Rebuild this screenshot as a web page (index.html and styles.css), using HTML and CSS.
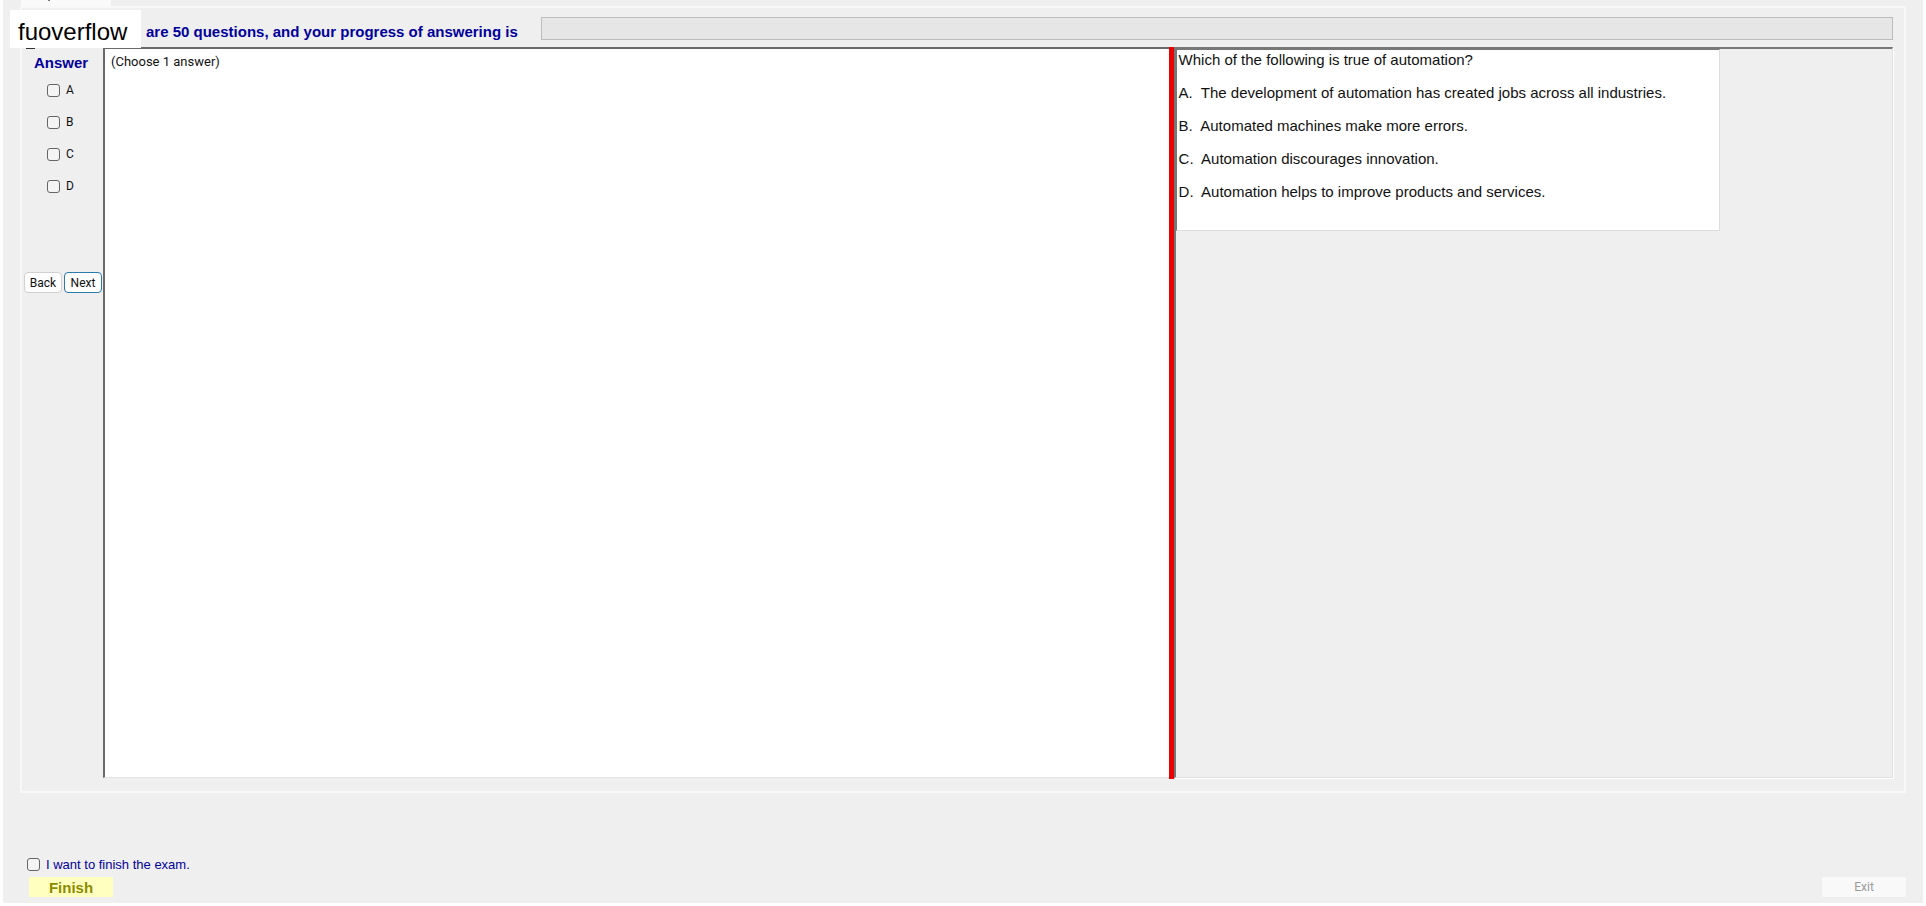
FILE: index.html
```
<!DOCTYPE html>
<html lang="en">
<head>
  <meta charset="UTF-8">
  <title>Exam</title>
  <link rel="stylesheet" href="styles.css">
</head>
<body>
  <div class="window">
    <div class="tab"></div>

    <div class="tab-page">
      <header class="top-bar">
        <div class="brand">fuoverflow</div>
        <label for="progress">are 50 questions, and your progress of answering is</label>
        <progress id="progress" value="0" max="50"></progress>
      </header>

      <div class="exam">
        <fieldset class="answers">
          <legend>Answer</legend>
          <label><input type="checkbox" name="answer" value="A">A</label>
          <label><input type="checkbox" name="answer" value="B">B</label>
          <label><input type="checkbox" name="answer" value="C">C</label>
          <label><input type="checkbox" name="answer" value="D">D</label>
          <div class="nav-buttons">
            <button type="button">Back</button>
            <button type="button" class="next">Next</button>
          </div>
        </fieldset>

        <main class="sheet">(Choose 1 answer)</main>
        <div class="splitter"></div>

        <section class="side">
          <div class="question">
            <p>Which of the following is true of automation?</p>
            <p>A.&nbsp; The development of automation has created jobs across all industries.</p>
            <p>B.&nbsp; Automated machines make more errors.</p>
            <p>C.&nbsp; Automation discourages innovation.</p>
            <p>D.&nbsp; Automation helps to improve products and services.</p>
          </div>
        </section>
      </div>
    </div>

    <footer class="bottom-bar">
      <div class="finish">
        <label><input type="checkbox" id="want-finish">I want to finish the exam.</label>
        <button type="button" class="finish-btn">Finish</button>
      </div>
      <button type="button" class="exit-btn" disabled>Exit</button>
    </footer>
  </div>
</body>
</html>
```

FILE: styles.css
```
* {
  box-sizing: border-box;
}

body {
  margin: 0;
  background-color: #fff;
  color: #111;
  font-family: "Liberation Sans", Arial, sans-serif;
  font-size: 13px;
}

.window {
  display: flex;
  flex-direction: column;
  height: calc(100vh - 3px);
  margin: 0 3px;
  padding: 0 17px;
  background-color: #efefef;
}

.tab {
  width: 90px;
  height: 6px;
  margin-left: 1px;
  padding-left: 27px;
  background-color: #fafafa;
}

/* end of the tab caption above the window edge */
.tab::before {
  content: "";
  display: block;
  width: 2px;
  height: 1px;
  background-color: #777;
}

.tab-page {
  flex: 1;
  display: flex;
  flex-direction: column;
  border: 2px solid #f8f8f8;
  padding: 0 11px 13px 0;
}

.top-bar {
  display: flex;
  align-items: flex-start;
  height: 39px;
  margin-left: -12px;
}

.brand {
  position: relative;
  width: 131px;
  height: 38px;
  margin-top: 2px;
  padding-left: 8px;
  background-color: #fff;
  color: #000;
  font-size: 24px;
  line-height: 44px;
}

.brand::after {
  content: "";
  position: absolute;
  left: 16px;
  top: 100%;
  width: 9px;
  height: 1px;
  background-color: #333;
}

.top-bar label {
  margin: 16px 23px 0 5px;
  color: #00009c;
  font-size: 15px;
  font-weight: bold;
  line-height: 16px;
  white-space: nowrap;
}

progress {
  appearance: none;
  flex: 1;
  height: 23px;
  margin-top: 9px;
  border: 1px solid #bcbcbc;
  background-color: #e6e6e6;
}

progress::-webkit-progress-bar {
  background-color: #e6e6e6;
}

.exam {
  flex: 1;
  display: flex;
}

.answers {
  width: 81px;
  margin: 0;
  padding: 0;
  border: 0;
  font-family: Roboto, sans-serif;
  font-size: 12px;
}

.answers legend {
  float: left;
  width: 100%;
  margin-bottom: 12px;
  padding: 8px 0 0 12px;
  color: #00009c;
  font-family: "Liberation Sans", Arial, sans-serif;
  font-size: 15px;
  font-weight: bold;
  line-height: 16px;
}

.answers label {
  clear: both;
  display: flex;
  align-items: center;
  gap: 6px;
  height: 14px;
  margin: 0 0 18px 25px;
}

input[type="checkbox"] {
  appearance: none;
  width: 13px;
  height: 13px;
  margin: 0;
  border: 1px solid #666;
  border-radius: 3px;
  background-color: #f4f4f4;
}

input[type="checkbox"]:checked {
  background-color: #0067c0;
}

button {
  padding: 0;
  font-family: Roboto, sans-serif;
  font-size: 12px;
}

.nav-buttons {
  display: flex;
  gap: 2px;
  margin: 79px 0 0 2px;
}

.nav-buttons button {
  width: 38px;
  height: 21px;
  border: 1px solid #d0d0d0;
  border-radius: 4px;
  background-color: #fdfdfd;
  color: #111;
}

.nav-buttons .next {
  border-color: #2a7ab0;
}

.sheet {
  flex: 1051;
  padding: 5px 6px;
  border: 2px solid #696969;
  border-right: 0;
  border-bottom: 1px solid #e3e3e3;
  background-color: #fff;
  font-family: Roboto, sans-serif;
  line-height: 15px;
}

.splitter {
  width: 5px;
  margin-bottom: -1px;
  background-color: #ea0000;
}

.side {
  flex: 716;
  border: 2px solid #777;
  border-right: 1px solid #e0e0e0;
  border-bottom: 1px solid #e0e0e0;
  box-shadow: 1px 1px 0 #fff;
}

.question {
  width: 76%;
  height: 182px;
  padding: 1px 2px;
  border: 1px solid #777;
  border-right-color: #ddd;
  border-bottom-color: #ddd;
  background-color: #fff;
  font-size: 15px;
  line-height: 17px;
}

.question p {
  margin: 0 0 16px;
}

.bottom-bar {
  display: flex;
  align-items: flex-end;
  justify-content: space-between;
  height: 110px;
  padding: 0 0 6px 7px;
}

.finish label {
  display: flex;
  align-items: center;
  gap: 6px;
  margin-bottom: 5px;
  color: #00009c;
}

.finish-btn {
  display: block;
  width: 84px;
  height: 20px;
  margin-left: 2px;
  border: 0;
  background-color: #ffffc0;
  color: #8b8b00;
  font-family: "Liberation Sans", Arial, sans-serif;
  font-size: 15px;
  font-weight: bold;
}

.exit-btn {
  width: 84px;
  height: 20px;
  border: 0;
  border-radius: 2px;
  background-color: #f9f9f9;
  color: #9a9a9a;
}
```
